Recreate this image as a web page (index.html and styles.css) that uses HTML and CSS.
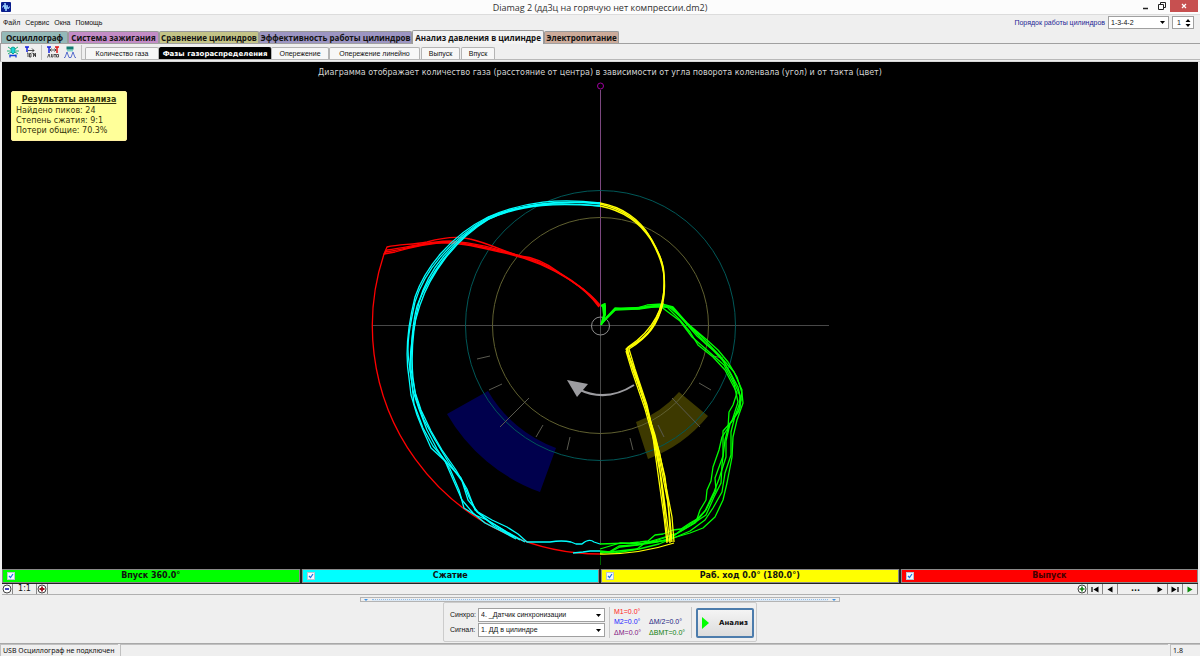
FILE: index.html
```html
<!DOCTYPE html>
<html lang="ru">
<head>
<meta charset="utf-8">
<title>Diamag 2</title>
<link rel="stylesheet" href="styles.css">
</head>
<body>
<header class="titlebar">
  <svg class="app-icon" viewBox="0 0 10 10" aria-hidden="true"><rect width="10" height="10" rx="1" fill="#0a1e8c"/><path d="M1 5h1l1-2 1 4V1l1 8 1-6 1 4 1-2h1" fill="none" stroke="#9fd4ff" stroke-width="1"/></svg>
  <h1 class="title">Diamag 2 (дд3ц на горячую нет компрессии.dm2)</h1>
  <div class="window-buttons">
    <button class="win" aria-label="Свернуть"><svg viewBox="0 0 10 10"><path d="M2 7.5h5" stroke="#222" stroke-width="1.5"/></svg></button>
    <button class="win" aria-label="Восстановить"><svg viewBox="0 0 10 10"><path d="M3.5 3V1.5h5v5H7M1.5 3.5h5v5h-5z" fill="none" stroke="#222"/></svg></button>
    <button class="win close" aria-label="Закрыть"><svg viewBox="0 0 10 10"><path d="M3 3l4 4M7 3L3 7" stroke="#fff" stroke-width="1.2"/></svg></button>
  </div>
</header>

<div class="menubar">
  <nav class="menu">
    <button>Файл</button><button>Сервис</button><button>Окна</button><button>Помощь</button>
  </nav>
  <div class="order">
    <label for="order">Порядок работы цилиндров</label>
    <select id="order" class="field order-select"><option>1-3-4-2</option></select>
    <div class="field spin">
      <input type="text" value="1" aria-label="Номер цилиндра">
      <svg viewBox="0 0 6 10" aria-hidden="true"><path d="M.5 4L3 1l2.500 3zM.5 6L3 9l2.500-3z"/></svg>
    </div>
  </div>
</div>

<nav class="tabs">
  <button class="tab teal">Осциллограф</button>
  <button class="tab pink">Система зажигания</button>
  <button class="tab olive">Сравнение цилиндров</button>
  <button class="tab violet">Эффективность работы цилиндров</button>
  <button class="tab active">Анализ давления в цилиндре</button>
  <button class="tab brown">Электропитание</button>
</nav>

<div class="toolbar">
  <div class="tools">
    <button class="tool" aria-label="Датчик"><svg viewBox="0 0 12 12"><path d="M1 1l3 2M11 1L8 3M0 5h3M12 5H9M1 8l3-2M11 8L8 6" stroke="#1fae72"/><path d="M4 2l2-1 2 1v4L6 8 4 6z" fill="#18d8dc" stroke="#129c90"/><path d="M3 9.500h6M3 8.500v3M9 8.500v3" stroke="#1640d8" stroke-width="1.300"/></svg></button>
    <button class="tool" aria-label="Порядок"><svg viewBox="0 0 12 12"><path d="M1 1h4M3 1v5" stroke="#1622dd" stroke-width="1.500"/><path d="M4 4.500h6M8 2.500l2 2-2 2M3 7h1v4M5.500 7.500h1.500v3.500H5.500zM8.500 8l1-1v4M10.500 7.500v2H12M11.500 7v4" fill="none" stroke="#222" stroke-width=".8"/></svg></button>
    <span class="divider"></span>
    <button class="tool" aria-label="Авто"><svg viewBox="0 0 12 12"><path d="M0 1h4M2 1v6" stroke="#1622dd" stroke-width="1.500"/><path d="M8 1h4M10 1v6" stroke="#e01818" stroke-width="1.500"/><path d="M3 4h6M4.500 2.500L3 4l1.500 1.500M7.500 2.500L9 4 7.500 5.500" fill="none" stroke="#333" stroke-width=".8"/><path d="M.5 11.500L2 8l1 3.500M4.500 8v3H6V8M7 8.500h2M8 8.500v3M9.500 8.500h2v2.500h-2z" fill="none" stroke="#333" stroke-width=".8"/></svg></button>
    <button class="tool" aria-label="Импульсы"><svg viewBox="0 0 12 12"><path d="M2.500 .5h7v3h-7z" fill="#127c72"/><path d="M4 3.500v2M6 3.500v2M8 3.500v2" stroke="#18b8a0"/><path d="M0 11.500h1L3 6l2 5.500h2L9 6l2 5.500h1" fill="none" stroke="#4860c8" stroke-width=".9"/></svg></button>
    <span class="divider"></span>
  </div>
  <nav class="subtabs">
    <button class="subtab w-gas">Количество газа</button>
    <button class="subtab selected">Фазы газораспределения</button>
    <button class="subtab w-adv">Опережение</button>
    <button class="subtab w-lin">Опережение линейно</button>
    <button class="subtab w-out">Выпуск</button>
    <button class="subtab w-in">Впуск</button>
  </nav>
</div>

<main class="stage">
  <svg class="diagram" viewBox="2 62 1196 507" role="img" aria-label="Диаграмма фаз газораспределения">
    <path d="M488 391A129 129 0 0 0 556 448L540 492A177 177 0 0 1 447 414z" fill="#00004d"/>
    <path d="M679 392A103 103 0 0 1 636 422L648 459A141 141 0 0 0 708 416z" fill="#3d3900"/>
    <path d="M372 325.500H829M600.500 326V545" stroke="#484848"/>
    <path d="M600.500 90V326" stroke="#7c4880"/>
    <path d="M600.500 556V565" stroke="#006000"/>
    <circle cx="600.500" cy="86" r="3" fill="none" stroke="#a000a0"/>
    <circle cx="600.500" cy="325.500" r="135" fill="none" stroke="#005858"/>
    <circle cx="600.500" cy="325.500" r="108" fill="none" stroke="#606030"/>
    <circle cx="600.500" cy="326" r="9" fill="none" stroke="#8c8c8c"/>
    <path d="M477 359l13-3M489 390l13-6M500 427l29-29M536 437l7-12M567 450l3-13M630 438l3 12M658 425l6 12M672 398l28 29M699 383l12 7M713 356l10 2" stroke="#5a5a50"/>
    <path d="M634 385Q606 403 578 389" fill="none" stroke="#9c9ca0" stroke-width="2"/>
    <path d="M567 380l21 4-11 13z" fill="#9c9ca0"/>

    <g class="trace" stroke="#f00">
      <path d="M384 254A228 228 0 0 0 600 554"/>
      <path d="M384 254L387 247C400 244 412 245 427 242C445 237 458 236 470 239C488 243 505 252 520 256C535 257 548 264 560 273C577 283 590 293 600 306"/>
      <path d="M384 254L387 250C410 247 430 241 450 241C480 243 500 250 520 256C540 262 562 274 579 286Q592 296 599 306"/>
      <path d="M385 252C400 250 416 245 434 243C455 242 470 245 500 252C530 258 550 267 570 280Q588 292 599 307"/>
      <path d="M384 254L395 252C411 247 432 243 450 242C471 243 500 251 520 256C545 262 560 273 577 285Q590 293 600 305"/>
    </g>
    <g class="trace" stroke="#0ff">
      <path d="M600 203C560 198 525 201 488 217C450 236 425 268 415 297C408 325 405 355 409 378L411 395 417 415 423 430 431 448 445 461 455 484 462 500 473 513 485 523 503 532 516 539"/>
      <path d="M600 206C562 202 525 202 489 218C452 240 428 270 419 302C412 332 411 355 413 378L416 398 424 420 435 440 449 463 462 481 468 500 478 512 492 520 507 527 518 534 527 542H550Q562 540 571 542L576 544H582Q589 538 594 542L600 544"/>
      <path d="M600 203C562 201 525 202 489 219C453 241 430 275 420 305C413 325 410 347 410 370L413 391 419 409 427 430 437 449 450 469 459 490 464 508 475 515 487 520 505 531 520 540"/>
      <path d="M600 206C560 203 523 203 487 220C451 240 427 280 417 306C412 325 411 347 411 369L415 392 421 410 431 431 442 450 456 470 467 489 475 510 489 521 507 532 525 542"/>
      <path d="M600 204C560 199 523 204 489 217C449 240 424 272 415 302C410 325 406 345 409 362L412 384 414 404 423 428 433 446 448 464 461 478 469 497 477 512 494 526 514 537"/>
      <path d="M573 553L583 552 590 551H600"/>
    </g>
    <g class="trace" stroke="#0f0">
      <path d="M601 325L604 315 603 307 605 304 601 306M601 325L605 315 605 305" stroke-width="2"/>
      <path d="M601 325L607 317 615 309 637 308 647 305 662 304 673 307 687 323 707 340 718 350 728 362 737 377 742 393 743 403 737 420 733 437 732 457 727 483 723 500 715 517 703 528 690 533 673 538 657 542 637 545 620 547 610 552 600 551"/>
      <path d="M602 323L615 310 637 309 647 307 662 305 668 308 680 320 690 332 698 345 713 357 725 370 737 393 733 405 729 412 728 428 722 437 719 450 713 467 711 481 707 490 706 500 700 510 697 519 690 523 681 529 673 530 663 534 655 535 648 541 640 542 630 543 600 544"/>
      <path d="M602 323L616 309 638 308 660 305 672 308 684 321 697 336 713 350 724 362 732 377 740 396 739 411 729 425 725 440 722 465 721 483 714 497 706 515 691 525 676 534 655 541 636 545 619 546 609 552 600 552"/>
      <path d="M603 321L615 308 639 309 660 306 669 307 681 317 690 326 706 344 720 356 730 372 738 387 741 400 735 416 731 432 731 455 725 473 722 492 713 508 705 520 690 531 676 537 659 544 639 549 615 553 600 552"/>
      <path d="M603 321L616 309 648 307 672 307 687 324 701 336 720 356 734 372 742 390 740 408 730 424 726 441 726 457 719 479 714 492 705 511 695 523 678 533 655 540 641 544 620 543 600 549"/>
      <path d="M660 306L680 321 692 337 708 351 724 365 734 384 738 402 732 421 723 431 723 456 715 478 716 490 706 510 695 521 681 530 669 540 645 543 637 549 600 553"/>
    </g>
    <g class="trace" stroke="#ff0">
      <path d="M600 203C622 207 640 219 650 237C658 252 664 262 664 275C666 295 662 309 658 317C652 330 646 338 626 349L629 357 637 380 645 403 652 430 655 452 664 517 667 543"/>
      <path d="M600 206C625 211 641 224 651 240C659 254 663 264 664 277C665 295 661 309 656 319C650 332 643 340 627 348L633 370 648 411 658 452 668 503 671 542"/>
      <path d="M600 204C623 209 641 222 652 240C660 254 665 266 664 287C664 305 655 330 628 347L628 354 637 377 650 420 660 455 672 517 674 542"/>
      <path d="M627 351L633 366 642 395 655 435 665 477 670 520 672 542"/>
      <path d="M629 349L635 369 647 405 657 450 663 490 670 543M626 351L632 371 645 409 654 441 660 473 668 542"/>
      <path d="M663 303C658 325 648 337 629 349M600 554A229 229 0 0 0 674 543"/>
    </g>
  </svg>
  <p class="caption">Диаграмма отображает количество газа (расстояние от центра) в зависимости от угла поворота коленвала (угол) и от такта (цвет)</p>
  <section class="results">
    <h2>Результаты анализа</h2>
    <p>Найдено пиков: 24</p>
    <p>Степень сжатия: 9:1</p>
    <p>Потери общие: 70.3%</p>
  </section>
</main>

<div class="strokes">
  <label class="stroke green"><input type="checkbox" checked><span>Впуск 360.0°</span></label>
  <label class="stroke cyan"><input type="checkbox" checked><span>Сжатие</span></label>
  <label class="stroke yellow"><input type="checkbox" checked><span>Раб. ход 0.0° (180.0°)</span></label>
  <label class="stroke red"><input type="checkbox" checked><span>Выпуск</span></label>
</div>

<div class="zoombar">
  <div class="group">
    <button class="mini" aria-label="Уменьшить"><svg viewBox="0 0 10 10"><circle cx="5" cy="5" r="4" fill="#fff" stroke="#444"/><path d="M3 5h4" stroke="#1a1ab0" stroke-width="1.600"/></svg></button>
    <button class="mini ratio">1:1</button>
    <button class="mini" aria-label="Увеличить"><svg viewBox="0 0 10 10"><circle cx="5" cy="5" r="4" fill="#fff" stroke="#444"/><path d="M2.500 5h5M5 2.500v5" stroke="#a01020" stroke-width="1.800"/></svg></button>
  </div>
  <div class="group">
    <button class="mini" aria-label="Добавить"><svg viewBox="0 0 10 10"><circle cx="5" cy="5" r="4" fill="#fff" stroke="#444"/><path d="M2.500 5h5M5 2.500v5" stroke="#108010" stroke-width="1.600"/></svg></button>
    <button class="mini step" aria-label="В начало"><svg viewBox="0 0 10 10"><path d="M2 3v5" stroke="#000" stroke-width="1.200"/><path d="M8.500 2.500v6L3.500 5.500z"/></svg></button>
    <button class="mini step" aria-label="Назад"><svg viewBox="0 0 10 10"><path d="M7.500 2.500v6L2.500 5.500z"/></svg></button>
    <button class="mini dots">...</button>
    <button class="mini step" aria-label="Вперёд"><svg viewBox="0 0 10 10"><path d="M2.500 2.500v6L7.500 5.500z"/></svg></button>
    <button class="mini step" aria-label="В конец"><svg viewBox="0 0 10 10"><path d="M8 3v5" stroke="#000" stroke-width="1.200"/><path d="M1.500 2.500v6L6.500 5.500z"/></svg></button>
    <button class="mini step" aria-label="Пуск"><svg viewBox="0 0 10 10"><path d="M2.500 2.500v6L7.500 5.500z" fill="#088a08"/></svg></button>
  </div>
</div>

<footer class="bottom">
  <div class="splitter"><i></i><b></b><i></i></div>
  <form class="panel">
    <div class="sources">
      <label for="sync">Синхро:</label>
      <select id="sync" class="field"><option>4. _Датчик синхронизации</option></select>
      <label for="signal">Сигнал:</label>
      <select id="signal" class="field"><option>1. ДД в цилиндре</option></select>
    </div>
    <div class="readings">
      <span class="m1">M1=0.0°</span>
      <span class="m2">M2=0.0°</span><span class="half">ΔM/2=0.0°</span>
      <span class="dm">ΔM=0.0°</span><span class="bmt">ΔВМТ=0.0°</span>
    </div>
    <button type="button" class="analyse"><svg viewBox="0 0 7 12" aria-hidden="true"><path d="M0 0L7 6 0 12z" fill="#0f0"/></svg><span>Анализ</span></button>
  </form>
</footer>

<div class="status">
  <span class="usb">USB Осциллограф не подключен</span>
  <span class="message"></span>
  <span class="version">1.8</span>
</div>
</body>
</html>
```
FILE: styles.css
```css
* { box-sizing: border-box; }

body {
  margin: 0;
  min-height: 100vh;
  display: flex;
  flex-direction: column;
  background: #efefef;
  color: #111;
  font: 7px/10px "Liberation Sans", Arial, sans-serif;
}

button, input, select { font: inherit; color: inherit; margin: 0; padding: 0; }
button { border: 0; background: none; white-space: nowrap; }
h1, h2, p { margin: 0; }
svg { display: block; }

/* Title bar */
.titlebar {
  display: grid;
  grid-template-columns: 1fr auto 1fr;
  height: 15px;
  background: #fcfcfc;
  border-bottom: 1px solid #dcdcdc;
}
.app-icon { width: 10px; height: 10px; margin: 2px 0 0 1px; }
.title { font: 9px/15px "Open Sans", "Noto Sans", sans-serif; color: #333; }
.window-buttons { display: flex; justify-content: flex-end; height: 12px; padding-right: 2px; }
.win { width: 16px; display: flex; align-items: center; justify-content: center; }
.win svg { width: 10px; height: 10px; }
.win.close { width: 28px; background: #c75050; }

/* Menu */
.menubar { display: flex; justify-content: space-between; height: 16px; padding-bottom: 1px; }
.menu { display: flex; gap: 5px; padding-left: 3px; align-items: center; }
.order { display: flex; align-items: center; gap: 3px; padding-right: 6px; }
.order label { color: #1c1c94; }
.field {
  appearance: none;
  height: 13px;
  border: 1px solid #a0a0a0;
  border-radius: 0;
  background: #fff;
}
select.field {
  padding: 0 14px 0 2px;
  background: #fff url("data:image/svg+xml,%3Csvg xmlns='http://www.w3.org/2000/svg' width='5' height='3'%3E%3Cpath d='M0 0h5L2.5 3z'/%3E%3C/svg%3E") no-repeat right 3px center;
}
.order-select { width: 61px; }
.spin { width: 22px; display: flex; align-items: center; gap: 2px; padding-left: 4px; }
.spin input { width: 6px; height: 10px; border: 0; }
.spin svg { width: 6px; height: 10px; }

/* Main tabs */
.tabs {
  display: flex;
  align-items: flex-end;
  height: 13px;
  padding-left: 1px;
  border-bottom: 1px solid #a0a0a0;
  font: bold 8px/11px "Open Sans", "Noto Sans", sans-serif;
}
.tab {
  height: 12px;
  border: 1px solid #9a9a9a;
  border-bottom: 0;
  border-radius: 2px 2px 0 0;
}
.teal { width: 67px; background: #94b9b8; }
.pink { width: 91px; background: #c38cc6; }
.olive { width: 100px; background: #c3c387; }
.violet { width: 153px; background: #9c95c2; }
.brown { width: 75px; background: #ccab9a; }
.tab.active { width: 132px; height: 14px; margin-bottom: -1px; background: #f3f3f3; }

/* Tools and inner tabs */
.toolbar {
  display: flex;
  align-items: flex-end;
  height: 18px;
  padding: 0 0 1px 1px;
  border-left: 1px solid #a0a0a0;
  border-bottom: 1px solid #d8d8d8;
}
.tools { display: flex; align-items: center; gap: 5px; padding-left: 5px; height: 16px; }
.tool svg { width: 12px; height: 12px; }
.divider { width: 1px; height: 15px; background: #c0c0c0; }
.subtabs { display: flex; flex: 1; padding-left: 3px; align-items: flex-end; border-bottom: 1px solid #b8b8b8; }
.subtab {
  height: 12px;
  border: 1px solid #b4b4b4;
  border-bottom: 0;
  border-radius: 2px 2px 0 0;
  background: #f7f7f7;
}
.subtab.selected { width: 112px; background: #000; border-color: #000; color: #fff; font: bold 7px/10px "DejaVu Sans", Verdana, sans-serif; }
.w-gas { width: 74px; }
.w-adv { width: 58px; }
.w-lin { width: 91px; }
.w-out { width: 39px; margin-left: 1px; }
.w-in { width: 34px; margin-left: 1px; }

/* Diagram */
.stage {
  flex: 1;
  display: grid;
  grid-template-columns: minmax(0, 1fr);
  grid-template-rows: minmax(0, 1fr);
  margin: 0 2px;
  background: #000;
}
.stage > * { grid-area: 1 / 1; }
.diagram { width: 100%; height: 100%; }
.trace { fill: none; stroke-width: 1.3; stroke-linejoin: round; }
.caption { justify-self: center; align-self: start; margin-top: 5px; color: #d4d4d4; font: 8px/11px "DejaVu Sans", Verdana, sans-serif; }
.results {
  justify-self: start;
  align-self: start;
  width: 116px;
  margin: 29px 0 0 9px;
  padding: 2px 4px 4px;
  border: 1px solid #fff0a0;
  border-radius: 2px;
  background: #ffff99;
  color: #33330a;
  font: 8px/10px "DejaVu Sans", Verdana, sans-serif;
}
.results h2 { font: bold 8px/11px "DejaVu Sans", Verdana, sans-serif; text-align: center; text-decoration: underline; margin-bottom: 1px; }

/* Stroke toggles */
.strokes { display: grid; grid-template-columns: repeat(4, 1fr); gap: 2px; margin: 0 2px; padding-bottom: 1px; background: #222; }
.stroke {
  display: flex;
  align-items: center;
  height: 14px;
  padding: 0 12px 0 4px;
  border: 1px solid #8a8a8a;
  color: #111;
  font: bold 8px/10px "DejaVu Sans", Verdana, sans-serif;
}
.stroke span { flex: 1; text-align: center; }
.stroke input {
  appearance: none;
  width: 8px;
  height: 8px;
  border: 1px solid #b8c4d0;
  background: #f4f8ff url("data:image/svg+xml,%3Csvg xmlns='http://www.w3.org/2000/svg' viewBox='0 0 6 6'%3E%3Cpath d='M1 3l1.500 1.500L5 1' fill='none' stroke='%231c74e0' stroke-width='1.200'/%3E%3C/svg%3E") center / 6px 6px no-repeat;
}
.green { background: #0f0; }
.cyan { background: #0ff; }
.yellow { background: #ff0; }
.red { background: #f00; }
.red span { color: #400; }

/* Zoom and playback */
.zoombar { display: flex; justify-content: space-between; height: 11px; margin: 0 2px; border-bottom: 1px solid #b0b0b0; }
.group { display: flex; }
.mini {
  display: flex;
  align-items: center;
  justify-content: center;
  width: 11px;
  height: 10px;
  border-right: 1px solid #888;
  font: 8px/10px "DejaVu Sans", Verdana, sans-serif;
}
.mini svg { width: 10px; height: 10px; }
.ratio { width: 24px; }
.step { width: 15px; }
.dots { width: 35px; border-right: 0; font-weight: bold; }

/* Source panel */
.bottom { display: flex; flex-direction: column; align-items: center; height: 49px; padding-top: 2px; border-bottom: 1px solid #a8a8a8; }
.splitter {
  display: flex;
  align-items: center;
  justify-content: space-between;
  gap: 4px;
  width: 40%;
  height: 5px;
  padding: 0 3px;
  border: 1px solid #b4b4b4;
}
.splitter i { border: 2px solid transparent; border-top-color: #3c94e8; border-bottom: 0; }
.splitter b { flex: 1; height: 2px; border-top: 1px dotted #8cbcec; border-bottom: 1px solid #dce8f4; }
.panel {
  display: flex;
  align-items: center;
  height: 40px;
  padding: 1px 2px 0 6px;
  border: 1px solid #cccccc;
  border-radius: 2px;
}
.sources { display: grid; grid-template-columns: auto 127px; gap: 1px 2px; align-items: center; }
.sources .field { height: 14px; }
.readings {
  display: grid;
  grid-template-columns: 35px 42px;
  height: 31px;
  margin: 0 4px;
  padding-left: 4px;
  border: solid #c8c8c8;
  border-width: 0 1px;
  align-items: center;
}
.m1 { grid-column: 1 / 3; color: #f22; }
.m2 { color: #22f; }
.half { color: #1a1a80; }
.dm { color: #801080; }
.bmt { color: #108010; }
.analyse {
  display: flex;
  align-items: center;
  justify-content: center;
  gap: 10px;
  width: 58px;
  height: 30px;
  border: 2px solid #4c7cac;
  border-radius: 2px;
  background: linear-gradient(#f4f4f4, #dcdcdc);
  font: bold 7px/10px "DejaVu Sans", Verdana, sans-serif;
}
.analyse svg { width: 7px; height: 12px; }

/* Status bar */
.status { display: flex; gap: 2px; height: 12px; font: 7px/11px "Noto Sans", sans-serif; }
.status span { border: solid #c0c0c0; border-width: 1px 0 0 1px; padding-left: 2px; white-space: nowrap; }
.usb { width: 118px; }
.message { flex: 1; }
.version { width: 30px; }
```
